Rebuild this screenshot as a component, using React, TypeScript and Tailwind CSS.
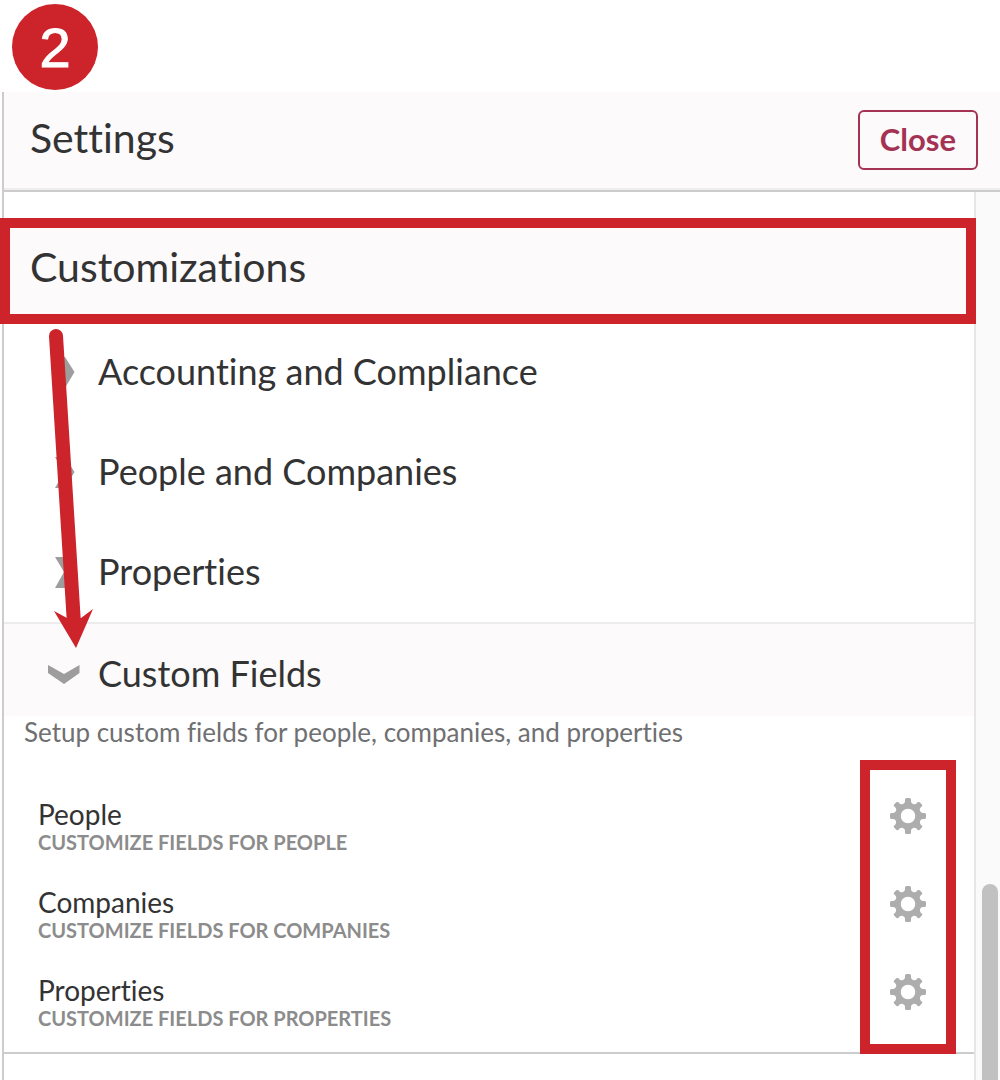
import { clsx } from "clsx";
import React from "react";

type FieldType = {
  name: string;
  description: string;
};

const sections = ["Accounting and Compliance", "People and Companies", "Properties"];

const fields: FieldType[] = [
  { name: "People", description: "Customize fields for people" },
  { name: "Companies", description: "Customize fields for companies" },
  { name: "Properties", description: "Customize fields for properties" },
];

function ChevronIcon({ open }: { open?: boolean }) {
  return (
    <svg viewBox="0 0 32 32" className="size-8 shrink-0 fill-[#9d9d9d]" aria-hidden="true">
      {open ? (
        <path d="M0 7l16 9 15.500-9v8l-15.500 11L0 15z" />
      ) : (
        <path d="M7 1h10l9.500 15L17 32H7l9-16z" />
      )}
    </svg>
  );
}

function GearIcon() {
  return (
    <svg viewBox="-18 -18 36 36" className="size-9 fill-[#adadad]" aria-hidden="true">
      {[0, 45, 90, 135, 180, 225, 270, 315].map((angle) => (
        <path
          key={angle}
          transform={`rotate(${angle})`}
          d="M-6-11.500Q-3-12.500-3-14.500V-16.500Q-3-18-1.500-18H1.500Q3-18 3-16.500V-14.500Q3-12.500 6-11.500z"
        />
      ))}
      <circle r="10" className="fill-none stroke-[#adadad] stroke-[5.500]" />
    </svg>
  );
}

function SectionButton({ name, open }: { name: string; open?: boolean }) {
  return (
    <button
      type="button"
      aria-expanded={!!open}
      className={clsx(
        "flex w-full items-center gap-[18px] pl-11 text-left text-[36px] leading-10 text-[#333]",
        open ? "h-[94px] border-t-2 border-[#ececec] bg-[#fcfafb] pt-2" : "h-[100px]"
      )}
    >
      <ChevronIcon open={open} />
      <span className="pb-0.5">{name}</span>
    </button>
  );
}

function FieldRow({ field }: { field: FieldType }) {
  return (
    <li className="flex h-[88px] items-start justify-between pr-12 pl-[34px]">
      <div className="pt-[14px]">
        <p className="text-[28px] leading-8 text-[#333]">{field.name}</p>
        <p className="text-[20px] leading-6 font-bold text-[#8c8c8c] uppercase">
          {field.description}
        </p>
      </div>
      <button type="button" aria-label={`Edit ${field.name}`} className="mt-[14px]">
        <GearIcon />
      </button>
    </li>
  );
}

export default function App() {
  return (
    <div className="flex h-screen flex-col overflow-hidden bg-white font-[Lato,sans-serif] [font-variant-ligatures:none]">
      <div className="h-[92px] shrink-0 pt-1 pl-3">
        <span className="flex size-[86px] items-center justify-center rounded-full bg-[#cd232b] pt-0.5 font-['Liberation_Sans',sans-serif] text-[56px] leading-none text-white [-webkit-text-stroke:1px_white]">
          2
        </span>
      </div>

      <div className="ml-0.5 flex min-h-0 flex-1 flex-col border-l-2 border-[#ccc]">
        <header className="shrink-0 border-b-2 border-[#ccc]">
          <div className="flex h-[98px] items-center justify-between border-b-2 border-[#eee] bg-[#fcfafb] pr-[22px] pl-[26px]">
            <h1 className="pb-1 text-[41px] leading-12 font-normal text-[#333]">Settings</h1>
            <button
              type="button"
              className="h-[60px] rounded-md border-2 border-[#a43353] px-5 pb-0.5 text-[31px] leading-8 font-bold text-[#a43353]"
            >
              Close
            </button>
          </div>
        </header>

        <div className="flex min-h-0 flex-1">
          <main className="min-w-0 flex-1 border-r-2 border-[#e6e6e6] pt-7">
            <div className="relative flex h-[102px] items-center bg-[#fcfafb] pl-[26px]">
              <h2 className="pb-2 text-[41px] leading-12 font-normal text-[#333]">Customizations</h2>
              <div className="pointer-events-none absolute -top-0.5 -right-0.5 -bottom-0.5 -left-1 border-10 border-[#cd232b]" />
            </div>

            <div className="relative">
              {sections.map((name) => (
                <SectionButton key={name} name={name} />
              ))}
              <SectionButton name="Custom Fields" open />
              <svg
                viewBox="0 0 48 324"
                className="pointer-events-none absolute top-1.5 left-11 h-[324px] w-12"
                aria-hidden="true"
              >
                <path d="M8 8L26 296" className="fill-none stroke-[#cd232b] stroke-[14]" strokeLinecap="round" />
                <path d="M6 283l13 7h14l12-9-17 39z" className="fill-[#cd232b]" />
              </svg>
            </div>

            <section className="relative border-b-2 border-[#ccc]">
              <p className="pl-5 text-[26px] leading-8 text-[#6f7072]">
                Setup custom fields for people, companies, and properties
              </p>
              <ul className="pt-9 pb-1">
                {fields.map((field) => (
                  <FieldRow key={field.name} field={field} />
                ))}
              </ul>
              <div className="pointer-events-none absolute top-11 right-[18px] -bottom-0.5 w-24 border-10 border-[#cd232b]" />
            </section>
          </main>

          <div className="flex w-6 shrink-0 flex-col bg-[#fafafa] pt-[692px] pl-1.5">
            <div className="w-4 flex-1 rounded-t-full bg-[#c1c1c1]" />
          </div>
        </div>
      </div>
    </div>
  );
}
